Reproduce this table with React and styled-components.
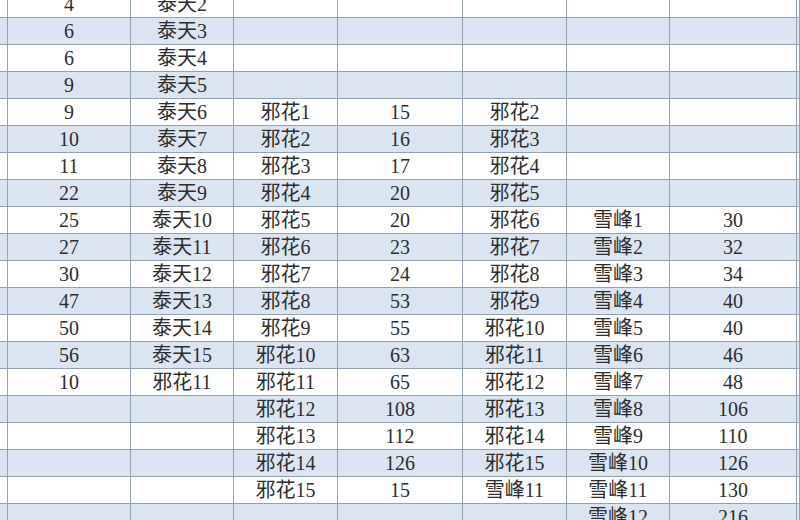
import React from 'react'
import styled, { createGlobalStyle } from 'styled-components'

const GlobalStyle = createGlobalStyle`
  html, body {
    margin: 0;
    padding: 0;
    background: #ffffff;
    overflow: hidden;
  }
  body {
    width: 800px;
    height: 520px;
  }
`

const Sheet = styled.div`
  display: grid;
  grid-template-columns: 8px 123px 103px 104px 125px 104px 103px 127px 1fr;
  grid-auto-rows: 27px;
  margin-top: -9px;
  width: 800px;
  font-family: "Liberation Serif", "Noto Sans CJK SC", serif;
  font-size: 20px;
  color: #2e2e2e;
`

const Cell = styled.div`
  box-sizing: border-box;
  display: flex;
  align-items: center;
  justify-content: center;
  white-space: nowrap;
  overflow: hidden;
  background: ${props => (props.band ? '#dbe5f1' : '#ffffff')};
  border-right: 1px solid #93a2b3;
  border-bottom: 1px solid #93a2b3;
  line-height: 1;
`

const rows = [
  ['4', '泰天2'],
  ['6', '泰天3'],
  ['6', '泰天4'],
  ['9', '泰天5'],
  ['9', '泰天6', '邪花1', '15', '邪花2'],
  ['10', '泰天7', '邪花2', '16', '邪花3'],
  ['11', '泰天8', '邪花3', '17', '邪花4'],
  ['22', '泰天9', '邪花4', '20', '邪花5'],
  ['25', '泰天10', '邪花5', '20', '邪花6', '雪峰1', '30'],
  ['27', '泰天11', '邪花6', '23', '邪花7', '雪峰2', '32'],
  ['30', '泰天12', '邪花7', '24', '邪花8', '雪峰3', '34'],
  ['47', '泰天13', '邪花8', '53', '邪花9', '雪峰4', '40'],
  ['50', '泰天14', '邪花9', '55', '邪花10', '雪峰5', '40'],
  ['56', '泰天15', '邪花10', '63', '邪花11', '雪峰6', '46'],
  ['10', '邪花11', '邪花11', '65', '邪花12', '雪峰7', '48'],
  ['', '', '邪花12', '108', '邪花13', '雪峰8', '106'],
  ['', '', '邪花13', '112', '邪花14', '雪峰9', '110'],
  ['', '', '邪花14', '126', '邪花15', '雪峰10', '126'],
  ['', '', '邪花15', '15', '雪峰11', '雪峰11', '130'],
  ['', '', '', '', '', '雪峰12', '216']
]

const COLS = 7

export default function App () {
  return (
    <>
      <GlobalStyle />
      <Sheet>
        {rows.map((row, r) => {
          const band = r % 2 === 1
          const cells = [<Cell key={`${r}-l`} band={band} />]
          for (let c = 0; c < COLS; c++) {
            cells.push(<Cell key={`${r}-${c}`} band={band}>{row[c] || ''}</Cell>)
          }
          cells.push(<Cell key={`${r}-r`} band={band} />)
          return cells
        })}
      </Sheet>
    </>
  )
}
